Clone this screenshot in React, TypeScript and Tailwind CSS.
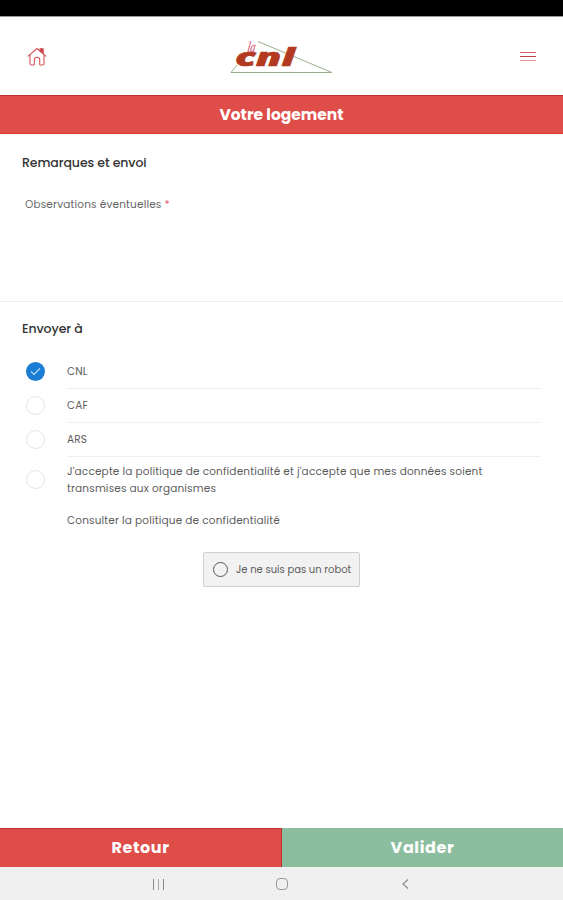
import { useState } from "react";

const recipients = ["CNL", "CAF", "ARS"];

function HomeIcon() {
    return (
        <svg width="20" height="20" viewBox="0 0 20 20" fill="none" stroke="#d0525a" strokeWidth="1.1" strokeLinejoin="round" strokeLinecap="round">
            <path d="M1.200 9.200 10 1.500l8.800 7.700" />
            <path d="M3 8v8.600c0 .9.6 1.400 1.400 1.400h2.100c.5 0 .8-.3.8-.8v-4.400c0-1.600 1-2.600 2.700-2.600s2.700 1 2.700 2.600v4.400c0 .5.3.8.8.8h2.100c.8 0 1.400-.5 1.400-1.400V8" />
            <path d="M13 1.800h3.200v4.900L13 4z" fill="#cf3f48" />
        </svg>
    );
}

function Logo() {
    return (
        <svg width="106" height="40" viewBox="0 0 106 40" role="img">
            <path d="M29 4.500 103 35.500H2L8 28" fill="none" stroke="#9bb08a" strokeWidth="1" />
            <text transform="translate(18 14.500) skewX(-8)" textLength="8" lengthAdjust="spacingAndGlyphs" fill="#d9637a" stroke="#d9637a" strokeWidth="0.300" fontSize="15" fontStyle="italic" fontFamily="Liberation Serif, serif">la</text>
            <text x="6" y="28.500" textLength="60" lengthAdjust="spacingAndGlyphs" fill="#b33a20" stroke="#b33a20" strokeWidth="0.500" fontSize="24" fontWeight="800" fontStyle="italic" fontFamily="Open Sans, sans-serif">cnl</text>
        </svg>
    );
}

function Radio({ checked }: { checked: boolean }) {
    if (!checked) {
        return <span className="mb-px block h-[19px] w-[19px] rounded-full border border-[#e6e6e6] bg-white" />;
    }
    return (
        <span className="mb-px flex h-[19px] w-[19px] items-center justify-center rounded-full bg-[#1b7dd3]">
            <svg width="11" height="9" viewBox="0 0 11 9" fill="none" stroke="#c5e2fa" strokeWidth="1.1">
                <path d="m1 4.700 3 2.800L10 1.300" />
            </svg>
        </span>
    );
}

export default function App() {
    const [selected, setSelected] = useState("CNL");
    const [accepted, setAccepted] = useState(false);

    return (
        <div className="flex h-[900px] w-[563px] flex-col overflow-hidden bg-white font-[Poppins,Inter,sans-serif] text-[#5c5c5c]">
            <div className="h-4 shrink-0 bg-black" />
            <header className="flex h-[79px] shrink-0 items-center justify-between border-t border-[#999] pt-px pr-[27px] pl-[27px]">
                <button className="w-5" aria-label="Accueil"><HomeIcon /></button>
                <div className="pr-1"><Logo /></div>
                <button className="flex w-4 flex-col gap-[3px]" aria-label="Menu">
                    <span className="h-px w-full bg-[#cf6068]" />
                    <span className="h-px w-full bg-[#bd3e49]" />
                    <span className="h-px w-full bg-[#e19ba5]" />
                </button>
            </header>
            <h1 className="flex h-[39px] shrink-0 items-center justify-center border-t border-b border-t-[#ba3034] border-b-[#d93b30] bg-[#df4d49] text-[15.500px] font-bold text-white">
                Votre logement
            </h1>

            <main className="flex grow flex-col">
                <section className="h-[168px] border-b border-[#ececec] pt-[19px] pl-[22px]">
                    <h2 className="text-[12.500px] leading-5 font-medium tracking-[-0.080px] text-[#333]">Remarques et envoi</h2>
                    <p className="mt-6 pl-[3px] text-[10.500px] leading-4 tracking-[0.180px] text-[#666]">
                        Observations éventuelles <span className="text-[#e0516b]">*</span>
                    </p>
                </section>
                <section>
                    <h2 className="pt-[17px] pl-[22px] text-[12.500px] leading-5 font-medium tracking-[-0.080px] text-[#333]">Envoyer à</h2>
                    <div className="mt-4 pl-[26px] text-[10.500px] tracking-[0.170px]">
                        {recipients.map((name) => (
                            <button key={name} className="flex h-[34px] w-full items-center text-left" onClick={() => setSelected(name)}>
                                <Radio checked={selected === name} />
                                <span className="ml-[22px] flex h-full w-[474px] items-center border-b border-[#f0f0f0]">{name}</span>
                            </button>
                        ))}
                        <button className="flex h-[46px] w-full items-center text-left" onClick={() => setAccepted(!accepted)}>
                            <Radio checked={accepted} />
                            <span className="ml-[22px] leading-[17px]">
                                J'accepte la politique de confidentialité et j'accepte que mes données soient
                                <br />
                                transmises aux organismes
                            </span>
                        </button>
                        <p className="mt-[9px] pl-[41px] leading-[17px]">Consulter la politique de confidentialité</p>
                    </div>
                    <button className="mx-auto mt-[23px] flex h-[35px] w-[157px] items-center rounded-[2px] border border-[#cfcfcf] bg-[#f2f2f2] pl-[9px] text-[10px]">
                        <span className="h-[15px] w-[15px] shrink-0 rounded-full border-[1.500px] border-[#555]" />
                        <span className="ml-2 whitespace-nowrap">Je ne suis pas un robot</span>
                    </button>
                </section>
            </main>

            <footer className="shrink-0">
                <div className="flex h-[39px] text-base font-bold tracking-[0.600px] text-white">
                    <button className="w-[282px] border-t border-r border-[#bd3333] bg-[#df4d49]">Retour</button>
                    <button className="grow bg-[#8bbd9e]">Valider</button>
                </div>
                <nav className="flex h-[33px] items-center bg-[#f0f0f0] pt-px pl-[153px] text-[#999]">
                    <div className="flex h-[11px] w-[11px] justify-between">
                        <span className="w-px bg-[#888]" />
                        <span className="w-px bg-[#aaa]" />
                        <span className="w-px bg-[#888]" />
                    </div>
                    <div className="ml-[112px] h-3 w-3 rounded-[4px] border border-[#999]" />
                    <svg className="ml-[114px]" width="7" height="12" viewBox="0 0 7 12" fill="none" stroke="#8c8c8c" strokeWidth="1.2">
                        <path d="M6 1.500 1 6l5 4.500" />
                    </svg>
                </nav>
            </footer>
        </div>
    );
}
